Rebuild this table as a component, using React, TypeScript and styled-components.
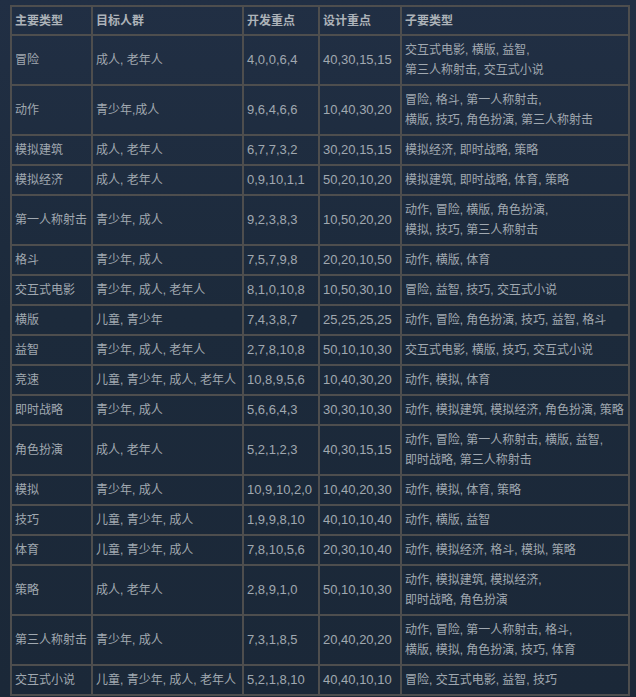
import React from "react";
import styled, { createGlobalStyle } from "styled-components";

const GlobalStyle = createGlobalStyle`
  html, body {
    margin: 0;
    padding: 0;
  }
  body {
    background: linear-gradient(to bottom, #212f44 0%, #1c2a3b 45%, #1b2838 100%);
    min-height: 697px;
    font-family: "Liberation Sans", "Noto Sans CJK SC", sans-serif;
    color: #a2aab2;
  }
`;

const Page = styled.div`
  padding: 5px 8px 1px 10px;
`;

const Table = styled.table`
  width: 100%;
  border-collapse: collapse;
  table-layout: fixed;
  border: 2px solid #4e4e4e;
`;

const HeadCell = styled.th`
  border: 2px solid #4e4e4e;
  padding: 0 4px 0 3px;
  height: 27px;
  text-align: left;
  font-size: 12px;
  font-weight: bold;
  line-height: 20px;
  color: #adb3b9;
  vertical-align: middle;
  white-space: nowrap;
`;

const Cell = styled.td<{ $numeric?: boolean }>`
  border: 2px solid #4e4e4e;
  padding: 4px 4px 4px 3px;
  font-size: ${(p) => (p.$numeric ? "13px" : "12px")};
  line-height: 20px;
  color: #a0a8b0;
  vertical-align: middle;
  white-space: nowrap;
  overflow: hidden;
`;

const Line = styled.div`
  white-space: nowrap;
`;

type Row = {
  genre: string;
  audience: string;
  dev: string;
  design: string;
  sub: string[];
};

const rows: Row[] = [
  { genre: "冒险", audience: "成人, 老年人", dev: "4,0,0,6,4", design: "40,30,15,15", sub: ["交互式电影, 横版, 益智,", "第三人称射击, 交互式小说"] },
  { genre: "动作", audience: "青少年,成人", dev: "9,6,4,6,6", design: "10,40,30,20", sub: ["冒险, 格斗, 第一人称射击,", "横版, 技巧, 角色扮演, 第三人称射击"] },
  { genre: "模拟建筑", audience: "成人, 老年人", dev: "6,7,7,3,2", design: "30,20,15,15", sub: ["模拟经济, 即时战略, 策略"] },
  { genre: "模拟经济", audience: "成人, 老年人", dev: "0,9,10,1,1", design: "50,20,10,20", sub: ["模拟建筑, 即时战略, 体育, 策略"] },
  { genre: "第一人称射击", audience: "青少年, 成人", dev: "9,2,3,8,3", design: "10,50,20,20", sub: ["动作, 冒险, 横版, 角色扮演,", "模拟, 技巧, 第三人称射击"] },
  { genre: "格斗", audience: "青少年, 成人", dev: "7,5,7,9,8", design: "20,20,10,50", sub: ["动作, 横版, 体育"] },
  { genre: "交互式电影", audience: "青少年, 成人, 老年人", dev: "8,1,0,10,8", design: "10,50,30,10", sub: ["冒险, 益智, 技巧, 交互式小说"] },
  { genre: "横版", audience: "儿童, 青少年", dev: "7,4,3,8,7", design: "25,25,25,25", sub: ["动作, 冒险, 角色扮演, 技巧, 益智, 格斗"] },
  { genre: "益智", audience: "青少年, 成人, 老年人", dev: "2,7,8,10,8", design: "50,10,10,30", sub: ["交互式电影, 横版, 技巧, 交互式小说"] },
  { genre: "竞速", audience: "儿童, 青少年, 成人, 老年人", dev: "10,8,9,5,6", design: "10,40,30,20", sub: ["动作, 模拟, 体育"] },
  { genre: "即时战略", audience: "青少年, 成人", dev: "5,6,6,4,3", design: "30,30,10,30", sub: ["动作, 模拟建筑, 模拟经济, 角色扮演, 策略"] },
  { genre: "角色扮演", audience: "成人, 老年人", dev: "5,2,1,2,3", design: "40,30,15,15", sub: ["动作, 冒险, 第一人称射击, 横版, 益智,", "即时战略, 第三人称射击"] },
  { genre: "模拟", audience: "青少年, 成人", dev: "10,9,10,2,0", design: "10,40,20,30", sub: ["动作, 模拟, 体育, 策略"] },
  { genre: "技巧", audience: "儿童, 青少年, 成人", dev: "1,9,9,8,10", design: "40,10,10,40", sub: ["动作, 横版, 益智"] },
  { genre: "体育", audience: "儿童, 青少年, 成人", dev: "7,8,10,5,6", design: "20,30,10,40", sub: ["动作, 模拟经济, 格斗, 模拟, 策略"] },
  { genre: "策略", audience: "成人, 老年人", dev: "2,8,9,1,0", design: "50,10,10,30", sub: ["动作, 模拟建筑, 模拟经济,", "即时战略, 角色扮演"] },
  { genre: "第三人称射击", audience: "青少年, 成人", dev: "7,3,1,8,5", design: "20,40,20,20", sub: ["动作, 冒险, 第一人称射击, 格斗,", "横版, 模拟, 角色扮演, 技巧, 体育"] },
  { genre: "交互式小说", audience: "儿童, 青少年, 成人, 老年人", dev: "5,2,1,8,10", design: "40,40,10,10", sub: ["冒险, 交互式电影, 益智, 技巧"] },
];

const columns = [
  { title: "主要类型", width: 81 },
  { title: "目标人群", width: 151 },
  { title: "开发重点", width: 76 },
  { title: "设计重点", width: 82 },
  { title: "子要类型", width: 228 },
];

export default function App() {
  return (
    <>
      <GlobalStyle />
      <Page>
        <Table>
          <colgroup>
            {columns.map((c) => (
              <col key={c.title} style={{ width: c.width }} />
            ))}
          </colgroup>
          <thead>
            <tr>
              {columns.map((c) => (
                <HeadCell key={c.title}>{c.title}</HeadCell>
              ))}
            </tr>
          </thead>
          <tbody>
            {rows.map((r) => (
              <tr key={r.genre}>
                <Cell>{r.genre}</Cell>
                <Cell>{r.audience}</Cell>
                <Cell $numeric>{r.dev}</Cell>
                <Cell $numeric>{r.design}</Cell>
                <Cell>
                  {r.sub.map((line) => (
                    <Line key={line}>{line}</Line>
                  ))}
                </Cell>
              </tr>
            ))}
          </tbody>
        </Table>
      </Page>
    </>
  );
}
